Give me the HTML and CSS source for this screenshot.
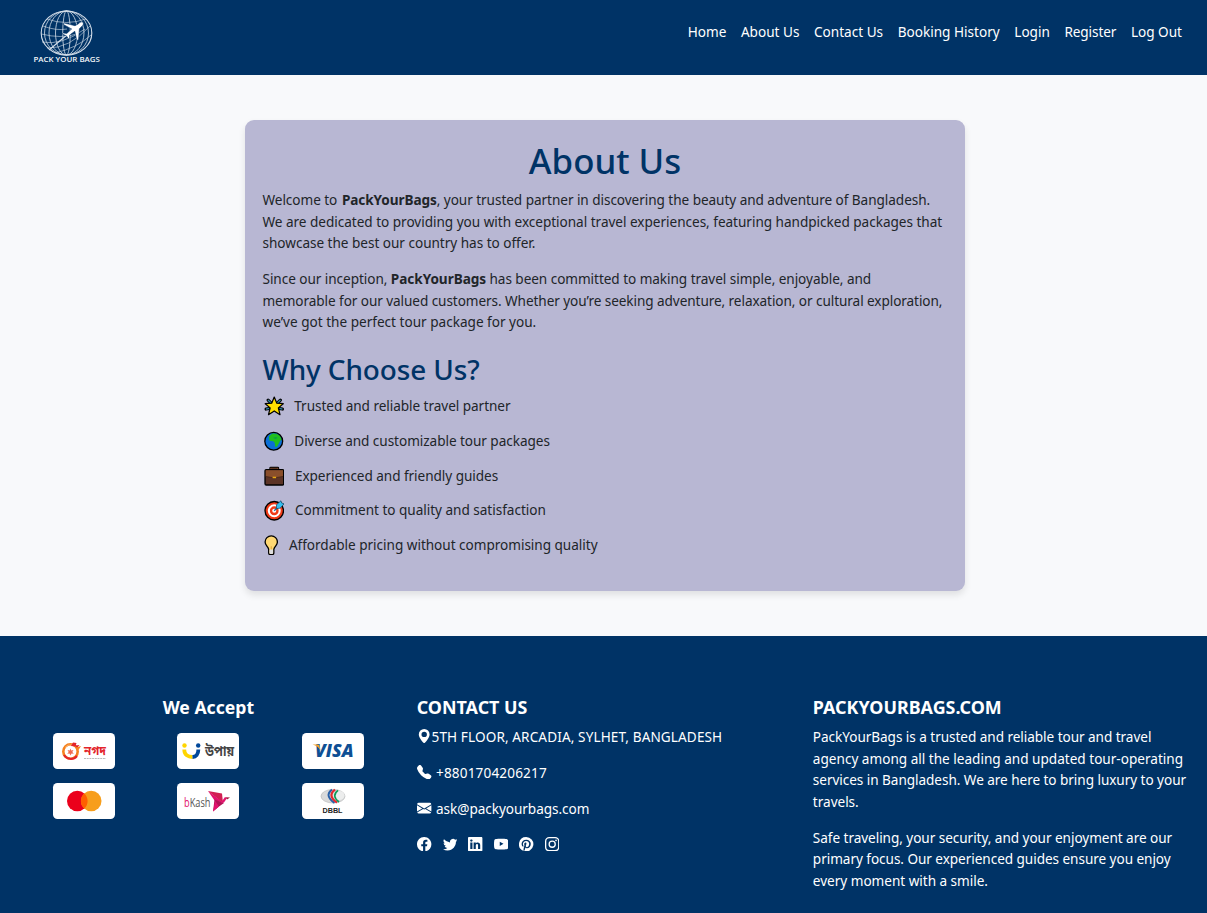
FILE: index.html
```html
<!DOCTYPE html>
<html lang="en">
<head>
<meta charset="utf-8">
<title>About Us - PackYourBags</title>
<link rel="stylesheet" href="styles.css">
</head>
<body>
<header class="navbar">
  <svg class="brand" viewBox="0 0 80 60" aria-label="Pack Your Bags">
    <g fill="none" stroke="#d5dfea" stroke-width=".8">
      <ellipse cx="39.5" cy="26" rx="25.3" ry="22" stroke-width="1.1"/>
      <ellipse cx="39.5" cy="26" rx="22" ry="22"/>
      <ellipse cx="39.5" cy="26" rx="17.5" ry="22"/>
      <ellipse cx="39.5" cy="26" rx="11" ry="22"/>
      <ellipse cx="39.5" cy="26" rx="3.8" ry="22"/>
      <path d="M20 12Q39 19 59 12M16 19Q29 24 40 22M14.5 27Q34 32 50 27M15 35Q34 39 58 22M20 41Q42 42 63 19M28 46Q50 41 64 28" stroke-width=".6"/>
      <path d="M22 43L47 22" stroke-width="1.1"/>
    </g>
    <path d="M55.8 15c-1.600-.5-3.100.5-4.600 1.900l-3.200 1.800-10.500-2.600-1.600 1.100 8.700 4.800-4.800 4.400-3.600-.4-1.100 1 4.300 1.800 2.200 3.300 1.100-1-.1-3 5.200-3.800 2 9.500 1.800-1.500.8-10.600 2.500-2.400c1.500-1.300 2.100-2.900.9-4.300z" fill="#fff" stroke="#036" stroke-width=".6"/>
    <text class="brand-text" x="6.400" y="55" textLength="66.500" lengthAdjust="spacingAndGlyphs">PACK YOUR BAGS</text>
  </svg>
  <nav class="links">
    <a>Home</a><a>About Us</a><a>Contact Us</a><a>Booking History</a><a>Login</a><a class="tight">Register</a><a>Log Out</a>
  </nav>
</header>

<main class="main">
  <section class="card">
    <h1>About Us</h1>
    <p><span class="line snug">Welcome to&nbsp;<b class="name">PackYourBags</b>, your trusted partner in discovering the beauty and adventure of Bangladesh.</span>
    <span class="line slight">We are dedicated to providing you with exceptional travel experiences, featuring handpicked packages that</span>
    <span class="line slight">showcase the best our country has to offer.</span></p>
    <p><span class="line snug">Since our inception, <b>PackYourBags</b> has been committed to making travel simple, enjoyable, and</span>
    <span class="line snugger">memorable for our valued customers. Whether you’re seeking adventure, relaxation, or cultural exploration,</span>
    <span class="line">we’ve got the perfect tour package for you.</span></p>
    <h2>Why Choose Us?</h2>
    <ul class="reasons">
      <li><svg class="emoji" viewBox="0 0 20 20"><path d="M4 4l3 3M16 4l-3 3M2 12.800l3-.7M18 12.800l-3-.7" stroke="#000" stroke-width="3" stroke-linecap="round"/><path d="M3.900 3.900l3 3M16.100 3.900l-3 3M2 12.800l3-.7M18 12.800l-3-.7" stroke="#2b88a8" stroke-width="1.300"/><path d="M10 1l2.500 6 6.300.5-4.800 4.100 1.600 6.600-5.600-3.600-5.600 3.600L6 11.600 1.200 7.500 7.500 7z" fill="#ffe100" stroke="#000" stroke-width="1.200" stroke-linejoin="round"/></svg><span class="snug">Trusted and reliable travel partner</span></li>
      <li><svg class="emoji" viewBox="0 0 20 20"><circle cx="9.500" cy="10" r="8.700" fill="#0b6fd6"/><path d="M5 5l3-2.500 4 .2 3.500 1.800 2 4-1.800 1-.6 1.500-2.300 4-1.800.5-.6-4-1.400-1.500-3.500-.6L5 8z" fill="#1fbf1f"/><path d="M9 6.500l3-.7 1 1-2 1z" fill="#0b9a50"/><circle cx="9.500" cy="10" r="8.700" fill="none" stroke="#000" stroke-width="1.300"/></svg><span class="snug">Diverse and customizable tour packages</span></li>
      <li><svg class="emoji" viewBox="0 0 20 20"><path d="M6.500 4V2h7v2" fill="none" stroke="#000" stroke-width="2.600" stroke-linejoin="round"/><path d="M6.600 4V2.100h6.800V4" fill="none" stroke="#7a452a" stroke-width="1"/><rect x="1" y="3.500" width="18.200" height="15" rx="1.200" fill="#5c3426" stroke="#000" stroke-width="1.300"/><path d="M1.700 4.200h16.800v6L10 11.800 1.700 10.200z" fill="#8a4f2b"/><path d="M1.700 10.200L10 11.700l8.500-1.500" stroke="#3f2218" fill="none" stroke-width=".7"/><path d="M8.400 11.200h3.400" stroke="#e8a712" stroke-width="1.500"/></svg><span class="shift snug">Experienced and friendly guides</span></li>
      <li><svg class="emoji" viewBox="0 0 20 20"><circle cx="10" cy="10.500" r="9" fill="#f03a17" stroke="#000" stroke-width="1.300"/><circle cx="10" cy="10.500" r="5.300" fill="#f03a17" stroke="#fff" stroke-width="2"/><circle cx="10" cy="10.500" r="2" fill="#fff"/><path d="M10 10.500l5-5" stroke="#146fa0" stroke-width="1.300"/><path d="M12 8.500l.3-4L16.500.8l.8 2.200 2.300.7-3.700 4.200z" fill="#35bff0" stroke="#123d58" stroke-width=".7"/></svg><span class="shift slight">Commitment to quality and satisfaction</span></li>
      <li><svg class="emoji bulb" viewBox="0 0 14 20"><path d="M7 .8a6 6 0 0 0-6 6c0 3.300 2.800 4.200 3.500 7.200v3.600c0 1 1 1.700 2.500 1.700s2.500-.7 2.500-1.700V14c.7-3 3.500-3.900 3.500-7.200a6 6 0 0 0-6-6z" fill="#ffd873" stroke="#000" stroke-width="1.300"/><path d="M5.200 14.200h3.600v3.300c0 .7-.6 1.100-1.800 1.100s-1.800-.4-1.800-1.100z" fill="#dedede"/><path d="M7 14v-3" stroke="#d69b31" stroke-width=".8"/></svg><span class="shift slight">Affordable pricing without compromising quality</span></li>
    </ul>
  </section>
</main>

<footer class="footer">
  <section>
    <h5 class="accept">We Accept</h5>
    <div class="payments">
      <svg class="pay" viewBox="0 0 62 36">
        <circle cx="17.500" cy="18.500" r="7.200" fill="none" stroke="#f5821f" stroke-width="2.600"/>
        <path d="M11 22a8 8 0 0 0 13 1" fill="none" stroke="#e3242b" stroke-width="2"/>
        <path d="M12 14.500a7 7 0 0 1 7-2.500" fill="none" stroke="#fbb36b" stroke-width="1"/>
        <path d="M18 13l2-3.500 3.500.5-1 3.500zM22 12.500l4.500-.5-2.500 3z" fill="#e3242b"/><path d="M23 14.500l5-1.500-2.500 4z" fill="#f5821f"/>
        <circle cx="17.500" cy="18.800" r="4.800" fill="#fff"/><path d="M17.500 15.500l.8 2 2.200-.4-1.200 1.900 1.500 1.800-2.300-.3-1 2-1-2-2.300.3 1.500-1.800-1.200-1.900 2.200.4z" fill="#f06a50"/>
        <text class="bn nagad" x="31" y="22" textLength="22" lengthAdjust="spacingAndGlyphs">নগদ</text>
        <path d="M31 25.500h22" stroke="#aaa" stroke-width=".8" stroke-dasharray="2 .7"/>
      </svg>
      <svg class="pay" viewBox="0 0 62 36">
        <path d="M7.300 16.500v.5c0 4.700 3.900 7 8.200 7" fill="none" stroke="#ffd500" stroke-width="3.800"/>
        <path d="M21.300 16.500v.5c0 4-2.300 6.800-5.800 7" fill="none" stroke="#00489b" stroke-width="3.800"/>
        <circle cx="7.500" cy="12.500" r="2.200" fill="#ffd500"/><circle cx="21.200" cy="12.500" r="2.200" fill="#00489b"/>
        <text class="bn upay" x="28" y="23" textLength="29" lengthAdjust="spacingAndGlyphs">উপায়</text>
      </svg>
      <svg class="pay" viewBox="0 0 62 36">
        <text class="visa" x="13" y="24.300" textLength="38.500" lengthAdjust="spacingAndGlyphs">VISA</text>
        <path d="M10.500 11.500h5.500q1 0 1.300 1l1.200 5c-1.500-3-4-5-8-6z" fill="#f0a12b"/>
      </svg>
      <svg class="pay" viewBox="0 0 62 36">
        <circle cx="24.300" cy="18" r="10.300" fill="#eb001b"/><circle cx="38.200" cy="18" r="10.300" fill="#f79e1b"/>
        <path d="M31.250 10.400a10.300 10.300 0 0 1 0 15.200 10.300 10.300 0 0 1 0-15.200z" fill="#ff5f00"/>
      </svg>
      <svg class="pay" viewBox="0 0 62 36">
        <text class="bkash" x="7" y="23.500" textLength="26.500" lengthAdjust="spacingAndGlyphs"><tspan fill="#e2136e">b</tspan>Kash</text>
        <path d="M31 8l14 2.500L46 20z" fill="#d12053"/><path d="M31 8l6.500 9.500 9.500 2.500z" fill="#e2136e"/>
        <path d="M37.500 16.500L36 28.500l6-5 5-3.500z" fill="#b01456"/><path d="M36 28.500l6-5-3.800-5.500z" fill="#e2136e"/>
        <path d="M44 19.500l4-5.500 2 1-3 4.500z" fill="#e2136e"/><path d="M49 14.300l4 .2-3 2z" fill="#9e1638"/>
      </svg>
      <svg class="pay" viewBox="0 0 62 36">
        <ellipse cx="31" cy="13.200" rx="12" ry="6.800" fill="#d9dadb" stroke="#b3b5b6" stroke-width=".6"/>
        <ellipse cx="37" cy="12.500" rx="5.500" ry="4.500" fill="#eceded"/>
        <path d="M30 6.600q-8 6 2.500 13.300" fill="none" stroke="#2860a8" stroke-width="2"/>
        <path d="M33 6.700q-8 6 2 13" fill="none" stroke="#e4272d" stroke-width="2.200"/>
        <path d="M36 7.300q-7 5.500 1 11.700" fill="none" stroke="#0f9a58" stroke-width="1.600"/>
        <text class="dbbl" x="20.500" y="29.600" textLength="20" lengthAdjust="spacingAndGlyphs">DBBL</text>
      </svg>
    </div>
  </section>
  <section>
    <h5>CONTACT US</h5>
    <p class="contact"><svg class="bi" viewBox="0 0 16 16"><path d="M8 16s6-5.686 6-10A6 6 0 0 0 2 6c0 4.314 6 10 6 10m0-7a3 3 0 1 1 0-6 3 3 0 0 1 0 6"/></svg><span class="address">5TH FLOOR, ARCADIA, SYLHET, BANGLADESH</span></p>
    <p class="contact spaced"><svg class="bi" viewBox="0 0 16 16"><path fill-rule="evenodd" d="M1.885.511a1.745 1.745 0 0 1 2.610.163L6.290 2.980c.329.423.445.974.315 1.494l-.547 2.190a.68.68 0 0 0 .178.643l2.457 2.457a.68.68 0 0 0 .644.178l2.189-.547a1.750 1.750 0 0 1 1.494.315l2.306 1.794c.829.645.905 1.870.163 2.611l-1.034 1.034c-.740.740-1.846 1.065-2.877.702a18.600 18.600 0 0 1-7.010-4.420 18.600 18.600 0 0 1-4.420-7.009c-.362-1.030-.037-2.137.703-2.877z"/></svg><span class="phone">+8801704206217</span></p>
    <p class="contact spaced"><svg class="bi" viewBox="0 0 16 16"><path d="M.050 3.555A2 2 0 0 1 2 2h12a2 2 0 0 1 1.950 1.555L8 8.414zM0 4.697v7.104l5.803-3.558zM6.761 8.830l-6.570 4.027A2 2 0 0 0 2 14h12a2 2 0 0 0 1.808-1.144l-6.570-4.027L8 9.586zm3.436-.586L16 11.801V4.697z"/></svg><span class="snug">ask@packyourbags.com</span></p>
    <div class="social">
      <svg class="bi" viewBox="0 0 16 16"><path d="M16 8.049c0-4.446-3.582-8.050-8-8.050C3.580 0-.002 3.603-.002 8.050c0 4.017 2.926 7.347 6.750 7.951v-5.625h-2.030V8.050H6.750V6.275c0-2.017 1.195-3.131 3.022-3.131.876 0 1.791.157 1.791.157v1.980h-1.009c-.993 0-1.303.621-1.303 1.258v1.510h2.218l-.354 2.326H9.250V16c3.824-.604 6.750-3.934 6.750-7.951"/></svg>
      <svg class="bi" viewBox="0 0 16 16"><path d="M5.026 15c6.038 0 9.341-5.003 9.341-9.334q.002-.211-.006-.422A6.700 6.700 0 0 0 16 3.542a6.700 6.700 0 0 1-1.889.518 3.300 3.300 0 0 0 1.447-1.817 6.500 6.500 0 0 1-2.087.793A3.286 3.286 0 0 0 7.875 6.030a9.320 9.320 0 0 1-6.767-3.429 3.290 3.290 0 0 0 1.018 4.382A3.300 3.300 0 0 1 .640 6.575v.045a3.290 3.290 0 0 0 2.632 3.218 3.200 3.200 0 0 1-.865.115 3 3 0 0 1-.614-.057 3.280 3.280 0 0 0 3.067 2.277A6.600 6.600 0 0 1 .780 13.580a6 6 0 0 1-.780-.045A9.340 9.340 0 0 0 5.026 15"/></svg>
      <svg class="bi" viewBox="0 0 16 16"><path d="M0 1.146C0 .513.526 0 1.175 0h13.650C15.474 0 16 .513 16 1.146v13.708c0 .633-.526 1.146-1.175 1.146H1.175C.526 16 0 15.487 0 14.854zm4.943 12.248V6.169H2.542v7.225zm-1.200-8.212c.837 0 1.358-.554 1.358-1.248-.015-.709-.520-1.248-1.342-1.248S2.400 3.226 2.400 3.934c0 .694.521 1.248 1.327 1.248zm4.908 8.212V9.359c0-.216.016-.432.080-.586.173-.431.568-.878 1.232-.878.869 0 1.216.662 1.216 1.634v3.865h2.401V9.250c0-2.220-1.184-3.252-2.764-3.252-1.274 0-1.845.700-2.165 1.193v.025h-.016l.016-.025V6.169h-2.400c.030.678 0 7.225 0 7.225z"/></svg>
      <svg class="bi" viewBox="0 0 16 16"><path fill-rule="evenodd" d="M8 2c2 0 5 .1 6 .3 1 .2 1.500.8 1.700 1.700.4 2.200.4 5.800 0 8-.2.900-.7 1.500-1.700 1.700-2 .4-10 .4-12 0-1-.2-1.500-.8-1.700-1.700-.4-2.200-.4-5.800 0-8C.5 3.100 1 2.500 2 2.300 3 2.100 6 2 8 2zM6.400 5.209v4.818l4.157-2.408z"/></svg>
      <svg class="bi" viewBox="0 0 16 16"><path d="M8 0a8 8 0 0 0-2.915 15.452c-.070-.633-.134-1.606.027-2.297.146-.625.938-3.977.938-3.977s-.239-.479-.239-1.187c0-1.113.645-1.943 1.448-1.943.682 0 1.012.512 1.012 1.127 0 .686-.437 1.712-.663 2.663-.188.796.400 1.446 1.185 1.446 1.422 0 2.515-1.500 2.515-3.664 0-1.915-1.377-3.254-3.342-3.254-2.276 0-3.612 1.707-3.612 3.471 0 .688.265 1.425.595 1.826a.24.24 0 0 1 .056.230c-.061.252-.196.796-.222.907-.035.146-.116.177-.268.107-1-.465-1.624-1.926-1.624-3.100 0-2.523 1.834-4.840 5.286-4.840 2.775 0 4.932 1.977 4.932 4.620 0 2.757-1.739 4.976-4.151 4.976-.811 0-1.573-.421-1.834-.919l-.498 1.902c-.181.695-.669 1.566-.995 2.097A8 8 0 1 0 8 0"/></svg>
      <svg class="bi" viewBox="0 0 16 16"><path fill-rule="evenodd" d="M4.700 0h6.600A4.700 4.700 0 0 1 16 4.700v6.600a4.700 4.700 0 0 1-4.700 4.700H4.700A4.700 4.700 0 0 1 0 11.300V4.700A4.700 4.700 0 0 1 4.700 0zm.1 1.440A3.360 3.360 0 0 0 1.440 4.800v6.400a3.360 3.360 0 0 0 3.360 3.360h6.400a3.360 3.360 0 0 0 3.360-3.360V4.800a3.360 3.360 0 0 0-3.360-3.360zM8 3.890a4.110 4.110 0 1 1 0 8.220 4.110 4.110 0 0 1 0-8.220zm0 1.440a2.670 2.670 0 1 0 0 5.340 2.670 2.670 0 0 0 0-5.340zM12.270 2.770a.96.96 0 1 1 0 1.920.96.96 0 0 1 0-1.920z"/></svg>
    </div>
  </section>
  <section class="about">
    <h5>PACKYOURBAGS.COM</h5>
    <p><span class="line snug">PackYourBags is a trusted and reliable tour and travel</span>
    <span class="line">agency among all the leading and updated tour-operating</span>
    <span class="line snug">services in Bangladesh. We are here to bring luxury to your</span>
    <span class="line slight">travels.</span></p>
    <p><span class="line snug">Safe traveling, your security, and your enjoyment are our</span>
    <span class="line snug">primary focus. Our experienced guides ensure you enjoy</span>
    <span class="line slight">every moment with a smile.</span></p>
  </section>
</footer>
</body>
</html>
```
FILE: styles.css
```css
* { box-sizing: border-box; }
body {
  margin: 0;
  height: 913px;
  overflow: hidden;
  background: #f8f9fb;
  color: #212529;
  font: 400 13.58px/21.6px "Noto Sans", "Open Sans", sans-serif;
}
h1, h2, h5, p, ul { margin: 0; padding: 0; }
.line { display: block; white-space: nowrap; }
.snug { letter-spacing: -.05px; }
.snugger { letter-spacing: -.072px; }
.slight { letter-spacing: -.025px; }
.tight { letter-spacing: -.1px; }
.name { letter-spacing: -.08px; margin-left: 1.200px; }

.navbar {
  height: 75px;
  padding: 0 25px 0 27px;
  display: flex;
  justify-content: space-between;
  align-items: flex-start;
  background: #036;
}
.brand { width: 80px; height: 60px; margin-top: 7px; }
.brand-text { font: 600 7.200px "Open Sans", sans-serif; fill: #f4f7fa; }
.links { display: flex; gap: 14.600px; margin-top: 21px; color: #fff; font-weight: 450; }

.main { height: 561px; padding: 45px 0 0 245px; }
.card {
  width: 720px;
  height: 471px;
  padding: 18px 17.500px;
  border-radius: 9px;
  background: #b8b7d3;
  box-shadow: 0 4px 7px rgba(0, 0, 0, .1);
}
h1 {
  color: #036;
  font-size: 34.800px;
  line-height: 43.200px;
  font-weight: 500;
  text-align: center;
  padding: 1px 0 6.800px;
}
.card p { padding-bottom: 14.400px; }
h2 {
  color: #036;
  font-size: 27.900px;
  line-height: 34.600px;
  font-weight: 500;
  letter-spacing: -.1px;
  padding: 4.300px 0 9.200px;
}
.reasons { list-style: none; }
.reasons li { height: 34.650px; display: flex; gap: 10.300px; }
.emoji { width: 20.500px; height: 20.500px; margin: 1px 0 0 1px; }
.bulb { width: 14.500px; }
.shift { padding-left: .6px; }

.footer {
  height: 277px;
  padding: 60.600px 21.600px 0;
  display: grid;
  grid-template-columns: repeat(3, minmax(0, 1fr));
  column-gap: 21.600px;
  background: #036;
  color: #fff;
  font-weight: 450;
}
h5 { font-size: 17.900px; line-height: 21.600px; font-weight: 700; padding-bottom: 7.800px; }
.accept { text-align: center; font-size: 17.600px; }
.about { padding-left: 1px; }
.footer p { padding-bottom: 14.400px; }
.payments {
  display: grid;
  grid-template-columns: repeat(3, 1fr);
  justify-items: center;
  row-gap: 14px;
  padding-top: 7px;
}
.pay { width: 62px; height: 36px; border-radius: 4.500px; background: #fff; }
.bn { font-family: "Noto Sans Bengali", "Noto Sans", sans-serif; font-weight: 700; font-size: 12.500px; }
.nagad { fill: #e3242b; }
.upay { fill: #444; font-size: 14px; }
.visa { font: italic 800 17px "Open Sans", sans-serif; fill: #0e4f94; }
.bkash { font: 400 12px "Open Sans", sans-serif; fill: #555; }
.dbbl { font: 700 8px "Liberation Sans", sans-serif; fill: #222; }
.contact { display: flex; }
.bi { width: 14.400px; height: 14.400px; fill: #fff; margin: 2.800px 0 0 .4px; flex: none; }
.spaced { gap: 4.500px; }
.address { letter-spacing: .11px; }
.phone { letter-spacing: .15px; }
.social { display: flex; gap: 10.800px; }
```
